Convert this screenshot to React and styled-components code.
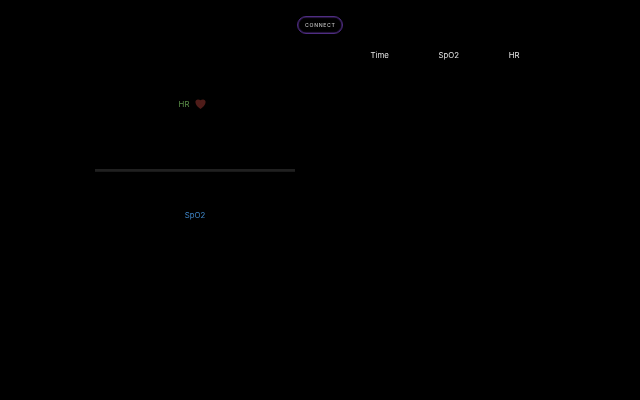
import React from 'react';
import styled, { createGlobalStyle } from 'styled-components';

const GlobalStyle = createGlobalStyle`
  html, body { margin: 0; background: #000; }
  * { box-sizing: border-box; }
`;
const Page = styled.main`
  height: 400px;
  padding-top: 16px;
  display: flex;
  flex-direction: column;
  align-items: center;
  font: 7.8px/10px Inter, sans-serif;
  overflow: hidden;
  will-change: transform;
`;
const ConnectButton = styled.button`
  width: 46px;
  height: 18px;
  flex: none;
  padding: 0;
  border: 1px solid #4f2d82;
  border-radius: 9px;
  background: #000;
  box-shadow: inset 0 0 1px 0.5px #4a2a7a;
  color: #c0c0c0;
  font: 500 5.2px/16px Inter, sans-serif;
  letter-spacing: 0.65px;
  text-indent: 0.65px;
`;
const Dashboard = styled.div`
  width: 450px;
  display: grid;
  grid-template-columns: 200px 149px;
  column-gap: 75.5px;
`;
const Vitals = styled.section`
  padding-top: 65px;
`;
const Reading = styled.div`
  height: 10px;
  display: flex;
  align-items: center;
  justify-content: center;
  gap: 6px;
  padding-right: ${({ $shift = 0 }) => $shift}px;
  color: ${({ $color }) => $color};
`;
const Divider = styled.hr`
  height: 3px;
  margin: 60px 0 38px;
  border: 0;
  background: linear-gradient(#202020 0 2px, #191919 2px);
`;
const Columns = styled.div`
  padding-top: 16px;
  display: flex;
  justify-content: space-between;
  color: #e4e4e4;
`;
const HeartIcon = styled.svg`
  width: 11px;
  height: 10px;
  fill: #4f1c19;
`;

export default function App() {
  return (
    <>
      <GlobalStyle />
      <Page>
        <ConnectButton>CONNECT</ConnectButton>
        <Dashboard>
          <Vitals>
            <Reading $color="#5c9049" $shift={5}>
              <span>HR</span>
              <HeartIcon viewBox="0 0 11 10"><path d="M5.5 10C3 8.4.4 6 .4 3.100C.4 1.300 1.500.400 3 .400C4.100.400 4.900.700 5.500 1.200C6.100.700 6.900.400 8 .400C9.500.400 10.600 1.300 10.600 3.100C10.600 6 8 8.400 5.500 10Z" /></HeartIcon>
            </Reading>
            <Divider />
            <Reading $color="#3f86c8">SpO2</Reading>
          </Vitals>
          <Columns><span>Time</span><span>SpO2</span><span>HR</span></Columns>
        </Dashboard>
      </Page>
    </>
  );
}
